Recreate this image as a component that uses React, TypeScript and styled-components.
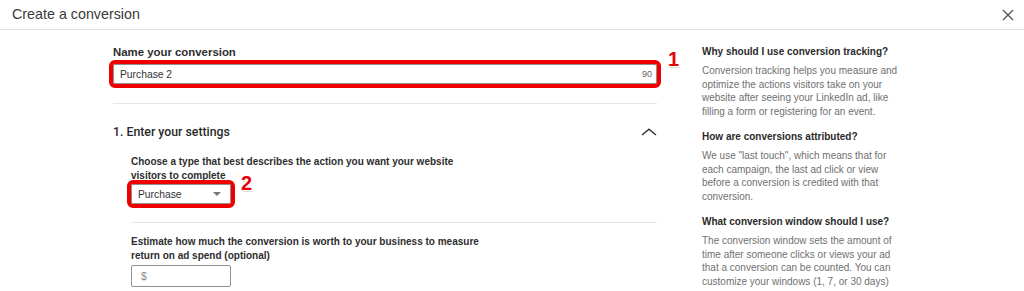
import styled, { createGlobalStyle } from "styled-components";

const GlobalStyle = createGlobalStyle`
  html, body {
    margin: 0;
    padding: 0;
    background: #ffffff;
    overflow: hidden;
  }
  body {
    font-family: "Liberation Sans", Arial, sans-serif;
    color: #333333;
  }
`;

const Page = styled.div`
  width: 1024px;
  height: 291px;
  background: #ffffff;
`;

const Header = styled.header`
  height: 29px;
  border-bottom: 1px solid #e3e3e3;
  display: flex;
  align-items: center;
  justify-content: space-between;
  padding: 0 10px 0 12px;
`;

const Title = styled.h1`
  margin: 0;
  font-size: 14.3px;
  font-weight: 400;
  color: #3a3a3a;
  line-height: 29px;
`;

const CloseButton = styled.button`
  border: 0;
  background: none;
  padding: 0;
  width: 12px;
  height: 12px;
  display: flex;
  margin-top: 1px;
`;

const Content = styled.div`
  display: flex;
  padding: 15px 0 0 113px;
`;

const Main = styled.section`
  width: 544px;
`;

const FieldLabel = styled.div<{ $size?: number; $maxWidth?: number }>`
  font-size: ${(p) => p.$size ?? 10}px;
  font-weight: 700;
  line-height: 14px;
  color: #2e2e2e;
  max-width: ${(p) => p.$maxWidth ?? 360}px;
`;

const Annotated = styled.div<{ $width?: number }>`
  position: relative;
  width: ${(p) => (p.$width ? `${p.$width}px` : "auto")};
`;

const Mark = styled.span<{ $top: number; $left: number }>`
  position: absolute;
  top: ${(p) => p.$top}px;
  left: calc(100% + ${(p) => p.$left}px);
  font-size: 20px;
  line-height: 20px;
  font-weight: 700;
  color: #e8000a;
  text-shadow: 1px 1px 0 #fff, -1px -1px 0 #fff, 1px -1px 0 #fff, -1px 1px 0 #fff,
    1px 2px 1px rgba(0, 0, 0, 0.15);
`;

const Field = styled.div<{ $width?: number; $height: number; $highlight?: boolean }>`
  box-sizing: border-box;
  width: ${(p) => (p.$width ? `${p.$width}px` : "100%")};
  height: ${(p) => p.$height}px;
  border: 1px solid #8f8f8f;
  border-radius: 2px;
  background: #fff;
  display: flex;
  align-items: center;
  justify-content: space-between;
  padding: 0 4px 0 6px;
  outline: ${(p) => (p.$highlight ? "4px solid #ee0000" : "none")};
  outline-offset: 0;
`;

const Value = styled.span<{ $muted?: boolean }>`
  font-size: 10.3px;
  color: ${(p) => (p.$muted ? "#8a8a8a" : "#333")};
  padding-left: ${(p) => (p.$muted ? 3 : 0)}px;
`;

const Counter = styled.span`
  font-size: 9px;
  color: #666;
`;

const Caret = styled.span`
  width: 0;
  height: 0;
  border-left: 4px solid transparent;
  border-right: 4px solid transparent;
  border-top: 4px solid #777;
  margin-right: 5px;
`;

const Divider = styled.hr<{ $top: number }>`
  border: 0;
  border-top: 1px solid #e6e6e6;
  margin: ${(p) => p.$top}px 0 0;
`;

const SectionHead = styled.div`
  margin-top: 20px;
  height: 16px;
  display: flex;
  align-items: center;
  justify-content: space-between;
`;

const SectionTitle = styled.h2`
  margin: 0;
  font-family: Roboto, "Liberation Sans", sans-serif;
  font-size: 12.3px;
  font-weight: 500;
  line-height: 16px;
  color: #2a2a2a;
`;

const SubSection = styled.div`
  padding-left: 18px;
`;

const Gap = styled.div<{ $h: number }>`
  height: ${(p) => p.$h}px;
`;

const Aside = styled.aside`
  margin-left: 45px;
  width: 206px;
`;

const HelpBlock = styled.div`
  & + & {
    margin-top: 12px;
  }
`;

const HelpTitle = styled.h3`
  margin: 0;
  font-size: 10px;
  font-weight: 700;
  line-height: 14px;
  color: #2a2a2a;
`;

const HelpText = styled.p`
  margin: 5px 0 0;
  font-size: 10px;
  line-height: 13.5px;
  color: #707070;
`;

const help = [
  {
    q: "Why should I use conversion tracking?",
    a: "Conversion tracking helps you measure and optimize the actions visitors take on your website after seeing your LinkedIn ad, like filling a form or registering for an event.",
  },
  {
    q: "How are conversions attributed?",
    a: "We use \"last touch\", which means that for each campaign, the last ad click or view before a conversion is credited with that conversion.",
  },
  {
    q: "What conversion window should I use?",
    a: "The conversion window sets the amount of time after someone clicks or views your ad that a conversion can be counted. You can customize your windows (1, 7, or 30 days)",
  },
];

function App() {
  return (
    <Page>
      <GlobalStyle />
      <Header>
        <Title>Create a conversion</Title>
        <CloseButton aria-label="Close">
          <svg width="12" height="12" viewBox="0 0 12 12">
            <path d="M1 1 L11 11 M11 1 L1 11" stroke="#555" strokeWidth="1.4" fill="none" />
          </svg>
        </CloseButton>
      </Header>
      <Content>
        <Main>
          <FieldLabel $size={11.4}>Name your conversion</FieldLabel>
          <Gap $h={5} />
          <Annotated>
            <Field $height={20} $highlight>
              <Value>Purchase 2</Value>
              <Counter>90</Counter>
            </Field>
            <Mark $top={-15} $left={11}>1</Mark>
          </Annotated>
          <Divider $top={19} />
          <SectionHead>
            <SectionTitle>1. Enter your settings</SectionTitle>
            <svg width="16" height="8" viewBox="0 0 16 8">
              <polyline points="1,7 8,1.2 15,7" stroke="#333" strokeWidth="1.5" fill="none" />
            </svg>
          </SectionHead>
          <SubSection>
            <Gap $h={15} />
            <FieldLabel $maxWidth={345}>
              Choose a type that best describes the action you want your website visitors to complete
            </FieldLabel>
            <Gap $h={1} />
            <Annotated $width={100}>
              <Field $width={100} $height={20} $highlight>
                <Value>Purchase</Value>
                <Caret />
              </Field>
              <Mark $top={-11} $left={10}>2</Mark>
            </Annotated>
            <Divider $top={18} />
            <Gap $h={12} />
            <FieldLabel $maxWidth={365}>
              Estimate how much the conversion is worth to your business to measure return on ad spend (optional)
            </FieldLabel>
            <Gap $h={2} />
            <Field $width={100} $height={22}>
              <Value $muted>$</Value>
            </Field>
          </SubSection>
        </Main>
        <Aside>
          {help.map((h) => (
            <HelpBlock key={h.q}>
              <HelpTitle>{h.q}</HelpTitle>
              <HelpText>{h.a}</HelpText>
            </HelpBlock>
          ))}
        </Aside>
      </Content>
    </Page>
  );
}

export default App;
